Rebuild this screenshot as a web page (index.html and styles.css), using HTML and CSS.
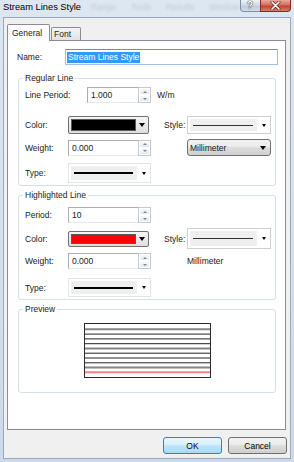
FILE: index.html
```html
<!DOCTYPE html>
<html lang="en">

<head>
    <meta charset="UTF-8">
    <meta name="viewport" content="width=device-width, initial-scale=1.0">
    <title>Stream Lines Style</title>
    <link rel="stylesheet" href="styles.css">
</head>

<body>

    <div class="window">
        <!-- Title bar (Aero glass) -->
        <div class="titlebar">
            <span class="title">Stream Lines Style</span>
            <div class="behind">
                <span>Range</span>
                <span>Tools</span>
                <span>Results</span>
                <span>Window</span>
            </div>
            <div class="caption-buttons">
                <span class="cap-btn help">?</span>
                <span class="cap-btn close">
                    <svg width="11" height="9" viewBox="0 0 11 9">
                        <path d="M2 1 L9 8 M9 1 L2 8" stroke="#6b2a20" stroke-width="3" stroke-linecap="round" />
                        <path d="M2 1 L9 8 M9 1 L2 8" stroke="#fff" stroke-width="1.6" stroke-linecap="round" />
                    </svg>
                </span>
            </div>
        </div>

        <div class="client">
            <!-- Tabs -->
            <div class="tabs">
                <span class="tab active">General</span>
                <span class="tab">Font</span>
            </div>

            <div class="panel">
                <div class="name-row">
                    <span class="name-label">Name:</span>
                    <div class="textbox name-box"><span class="selected">Stream Lines Style</span></div>
                </div>

                <!-- Regular line -->
                <fieldset class="group regular">
                    <legend>Regular Line</legend>
                    <div class="row r1">
                        <span class="label wide">Line Period:</span>
                        <div class="spin short">
                            <span class="value">1.000</span>
                            <span class="spin-btns"><i class="up"></i><i class="down"></i></span>
                        </div>
                        <span class="unit">W/m</span>
                    </div>
                    <div class="row r2">
                        <span class="label">Color:</span>
                        <div class="color-combo"><span class="swatch black"></span><span class="arrow big"></span></div>
                        <span class="style-label">Style:</span>
                        <div class="line-combo style-combo"><span class="line-area"><span class="line thin"></span></span><span class="arrow"></span></div>
                    </div>
                    <div class="row r3">
                        <span class="label">Weight:</span>
                        <div class="spin">
                            <span class="value">0.000</span>
                            <span class="spin-btns"><i class="up"></i><i class="down"></i></span>
                        </div>
                        <div class="dropdown">Millimeter<span class="arrow big"></span></div>
                    </div>
                    <div class="row r4">
                        <span class="label">Type:</span>
                        <div class="line-combo type-combo"><span class="line-area"><span class="line thick"></span></span><span class="arrow"></span></div>
                    </div>
                </fieldset>

                <!-- Highlighted line -->
                <fieldset class="group highlighted">
                    <legend>Highlighted Line</legend>
                    <div class="row h1">
                        <span class="label">Period:</span>
                        <div class="spin">
                            <span class="value">10</span>
                            <span class="spin-btns"><i class="up"></i><i class="down"></i></span>
                        </div>
                    </div>
                    <div class="row h2">
                        <span class="label">Color:</span>
                        <div class="color-combo"><span class="swatch red"></span><span class="arrow big"></span></div>
                        <span class="style-label">Style:</span>
                        <div class="line-combo style-combo"><span class="line-area"><span class="line thin"></span></span><span class="arrow"></span></div>
                    </div>
                    <div class="row h3">
                        <span class="label">Weight:</span>
                        <div class="spin">
                            <span class="value">0.000</span>
                            <span class="spin-btns"><i class="up"></i><i class="down"></i></span>
                        </div>
                        <span class="unit-text">Millimeter</span>
                    </div>
                    <div class="row h4">
                        <span class="label">Type:</span>
                        <div class="line-combo type-combo"><span class="line-area"><span class="line thick"></span></span><span class="arrow"></span></div>
                    </div>
                </fieldset>

                <!-- Preview -->
                <fieldset class="group preview">
                    <legend>Preview</legend>
                    <div class="preview-box">
                        <svg width="125" height="53" viewBox="0 0 125 53">
                            <line x1="0" y1="5.3" x2="125" y2="5.3" stroke="#858585" stroke-width="2" />
                            <line x1="0" y1="10.1" x2="125" y2="10.1" stroke="#222" stroke-width="1" />
                            <line x1="0" y1="14.9" x2="125" y2="14.9" stroke="#222" stroke-width="1" />
                            <line x1="0" y1="19.7" x2="125" y2="19.7" stroke="#222" stroke-width="1" />
                            <line x1="0" y1="24.4" x2="125" y2="24.4" stroke="#858585" stroke-width="2" />
                            <line x1="0" y1="29.2" x2="125" y2="29.2" stroke="#222" stroke-width="1" />
                            <line x1="0" y1="34" x2="125" y2="34" stroke="#222" stroke-width="1" />
                            <line x1="0" y1="38.8" x2="125" y2="38.8" stroke="#222" stroke-width="1" />
                            <line x1="0" y1="43.5" x2="125" y2="43.5" stroke="#858585" stroke-width="2" />
                            <line x1="0" y1="48.3" x2="125" y2="48.3" stroke="#ff8080" stroke-width="2" />
                        </svg>
                    </div>
                </fieldset>
            </div>

            <div class="buttons">
                <button type="button" class="btn default">OK</button>
                <button type="button" class="btn">Cancel</button>
            </div>
        </div>
    </div>

</body>
</html>
```

FILE: styles.css
```css
body {
    margin: 0;
    font-family: "Liberation Sans", Arial, sans-serif;
    font-size: 8.5px;
    color: #1a1a1a;
}

.window {
    width: 294px;
    height: 462px;
    box-sizing: border-box;
    padding: 0 3px 3px 3px;
    background: linear-gradient(#dde7f2, #cbd9ea);
    display: flex;
    flex-direction: column;
}

/* Title bar */
.titlebar {
    height: 17px;
    display: flex;
    align-items: flex-start;
    flex: none;
}

.title {
    font-size: 9.3px;
    line-height: 10px;
    margin-top: 2px;
    color: #000;
    white-space: nowrap;
}

.behind {
    display: flex;
    gap: 15px;
    margin: 3px 0 0 10px;
    font-size: 8.5px;
    line-height: 9px;
    color: rgba(60, 70, 90, 0.18);
    filter: blur(0.9px);
}

.caption-buttons {
    margin-left: auto;
    margin-right: 3px;
    display: flex;
}

.cap-btn {
    height: 12px;
    box-sizing: border-box;
    display: flex;
    align-items: center;
    justify-content: center;
}

.help {
    width: 20px;
    border: 1px solid #7e8fa5;
    border-top: none;
    border-right: none;
    border-radius: 0 0 0 4px;
    background: linear-gradient(#eef3f8, #cdd8e5 50%, #bccad9 55%, #d3dee9);
    color: #fff;
    font-weight: bold;
    font-size: 10px;
    text-shadow: 0 0 1px #222, 0 0 1px #222;
}

.close {
    width: 31px;
    border: 1px solid #7a2d22;
    border-top: none;
    border-radius: 0 0 4px 0;
    background: linear-gradient(#e9a899, #d4705e 45%, #c2422f 55%, #d8806a);
}

/* Client area */
.client {
    flex: 1;
    border: 1px solid #9aa9bc;
    background: #f0f0f0;
    padding: 6px 4px 0 3px;
    display: flex;
    flex-direction: column;
}

.tabs {
    display: flex;
    align-items: flex-end;
    height: 17px;
    margin-bottom: -1px;
    position: relative;
    z-index: 1;
}

.tab {
    box-sizing: border-box;
    height: 13px;
    width: 30px;
    margin: 0 0 1px 1px;
    padding-left: 2px;
    line-height: 12px;
    border: 1px solid #898c95;
    border-bottom: none;
    border-radius: 2px 2px 0 0;
    background: linear-gradient(#f4f4f4, #e2e2e2);
}

.tab.active {
    height: 17px;
    width: 43px;
    margin: 0;
    padding-left: 4px;
    line-height: 16px;
    background: #fff;
}

.panel {
    height: 390px;
    box-sizing: border-box;
    border: 1px solid #898c95;
    background: #fff;
    padding: 8px 0 0 9px;
}

.name-row {
    display: flex;
    align-items: center;
    height: 16px;
}

.name-label {
    width: 48px;
}

.textbox {
    box-sizing: border-box;
    border: 1px solid #abadb3;
    background: #fff;
    display: flex;
    align-items: center;
}

.name-box {
    width: 213px;
    height: 16px;
    border-color: #9cc3e6;
    border-top-color: #5d94c7;
    padding-left: 1px;
}

.selected {
    background: #3399ff;
    color: #fff;
    line-height: 11px;
    padding: 0 1px;
}

/* Group boxes */
.group {
    margin: 0 0 0 1px;
    width: 258px;
    min-width: 0;
    box-sizing: border-box;
    border: 1px solid #d5dfe5;
    border-radius: 3px;
    padding: 0 0 2px 6px;
}

.group legend {
    padding: 0 2px;
    margin-left: -2px;
    line-height: 10px;
    color: #222;
}

.regular {
    margin-top: 8px;
}

.highlighted {
    margin-top: 4px;
}

.preview {
    margin-top: 4px;
    padding: 0 6px 14px 6px;
}

.row {
    display: flex;
    align-items: center;
}

.label {
    width: 43px;
    flex: none;
}

.label.wide {
    width: 62px;
}

.r1 { margin-top: 4px; height: 16px; }
.r2 { margin-top: 13px; height: 18px; }
.r3 { margin-top: 5px; height: 17px; }
.r4 { margin-top: 7px; height: 20px; }

.h1 { margin-top: 7px; height: 16px; }
.h2 { margin-top: 5px; height: 21px; }
.h3 { margin-top: 4px; height: 16px; }
.h4 { margin-top: 9px; height: 19px; }

/* Numeric spinner */
.spin {
    width: 83px;
    height: 16px;
    box-sizing: border-box;
    display: flex;
    flex: none;
}

.spin.short {
    width: 64px;
}

.spin .value {
    flex: 1;
    border: 1px solid #abadb3;
    border-bottom-color: #e3e9ef;
    border-right: none;
    padding-left: 3px;
    line-height: 14px;
}

.spin-btns {
    width: 13px;
    box-sizing: border-box;
    border: 1px solid #c2c9d2;
    display: flex;
    flex-direction: column;
    background: #fff;
}

.spin-btns i {
    flex: 1;
    display: flex;
    align-items: center;
    justify-content: center;
    background: linear-gradient(#f6f8fa, #e4e9ef);
    border: 1px solid #fff;
}

.spin-btns i::after {
    content: "";
    border-left: 2px solid transparent;
    border-right: 2px solid transparent;
}

.spin-btns .up::after {
    border-bottom: 2px solid #7a8a9e;
}

.spin-btns .down::after {
    border-top: 2px solid #7a8a9e;
}

.unit {
    margin-left: 6px;
}

.unit-text {
    margin-left: 36px;
}

/* Combo boxes */
.arrow {
    width: 0;
    height: 0;
    border-left: 2.5px solid transparent;
    border-right: 2.5px solid transparent;
    border-top: 3px solid #000;
}

.arrow.big {
    border-left-width: 3.5px;
    border-right-width: 3.5px;
    border-top-width: 4px;
}

.color-combo {
    width: 81px;
    height: 18px;
    box-sizing: border-box;
    flex: none;
    border: 1px solid #707070;
    border-radius: 2px;
    background: linear-gradient(#f5f5f5, #dedede);
    padding: 2px 3px 2px 2px;
    display: flex;
    align-items: center;
}

.h2 .color-combo {
    height: 16px;
}

.swatch {
    flex: 1;
    align-self: stretch;
    border: 1px solid #5a5a5a;
    margin-right: 3px;
}

.swatch.black {
    background: #000;
}

.swatch.red {
    background: #ff0000;
}

.style-label {
    margin-left: 15px;
    width: 23px;
    flex: none;
}

.line-combo {
    box-sizing: border-box;
    flex: none;
    border: 1px solid #cdd1d6;
    background: #fff;
    display: flex;
    align-items: center;
    padding: 2px 0 2px 2px;
}

.line-area {
    flex: 1;
    align-self: stretch;
    background: #efefef;
    display: flex;
    align-items: center;
    padding: 0 4px 0 3px;
}

.line {
    flex: 1;
    background: #000;
}

.line.thin {
    height: 1px;
    background: #333;
}

.line.thick {
    height: 2px;
}

.line-combo .arrow {
    margin: 0 4px 0 5px;
}

.style-combo {
    width: 84px;
    height: 18px;
}

.h2 .style-combo {
    height: 21px;
}

.type-combo {
    width: 83px;
    height: 20px;
    border-color: #e2e4e7;
}

.h4 .type-combo {
    height: 19px;
}

.dropdown {
    margin-left: 36px;
    width: 84px;
    height: 17px;
    box-sizing: border-box;
    border: 1px solid #707070;
    border-radius: 3px;
    background: linear-gradient(#f2f2f2, #ebebeb 45%, #dddddd 50%, #cfcfcf);
    display: flex;
    align-items: center;
    justify-content: space-between;
    padding: 0 4px 0 2px;
}

/* Preview */
.preview-box {
    width: 127px;
    height: 55px;
    box-sizing: border-box;
    margin: 9px auto 0 auto;
    border: 1px solid #2b2b2b;
    background: #fff;
}

.preview-box svg {
    display: block;
}

/* Dialog buttons */
.buttons {
    display: flex;
    justify-content: flex-end;
    gap: 6px;
    margin: 7px -1px 0 0;
}

.btn {
    width: 59px;
    height: 17px;
    padding: 0;
    font-family: inherit;
    font-size: 8.5px;
    color: #000;
    border: 1px solid #707070;
    border-radius: 3px;
    background: linear-gradient(#f2f2f2, #ebebeb 45%, #dddddd 50%, #cfcfcf);
}

.btn.default {
    border-color: #3c7fb1;
    background: linear-gradient(#eaf6fd, #d9f0fc 45%, #bee6fd 50%, #a7d9f5);
}
```
